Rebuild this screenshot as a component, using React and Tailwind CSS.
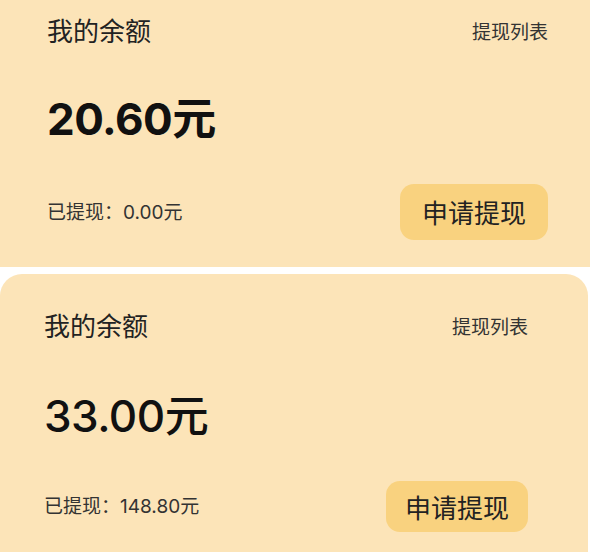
function BalanceCard({ amount, withdrawn, cardClass, headClass, amountRowClass, amountClass, footClass, btnClass }) {
  return (
    <div className={`bg-[#fce4b8] text-[#1a1a1a] ${cardClass}`}>
      <div className={`flex items-center justify-between ${headClass}`}>
        <span className="text-[26px] leading-none text-[#222]">我的余额</span>
        <span className="text-[19px] leading-none text-[#333]">提现列表</span>
      </div>
      <div className={`flex items-center ${amountRowClass}`}>
        <span className={`font-['Inter','Noto_Sans_CJK_SC',sans-serif] text-[44px] leading-none tracking-[-0.5px] text-[#111] ${amountClass}`}>
          {amount}元
        </span>
      </div>
      <div className={`flex items-center justify-between ${footClass}`}>
        <span className="font-['Inter','Noto_Sans_CJK_SC',sans-serif] text-[19px] leading-none text-[#333]">
          已提现：{withdrawn}元
        </span>
        <button className={`flex items-center justify-center rounded-[14px] bg-[#f9d27f] text-[26px] leading-none text-[#222] ${btnClass}`}>
          申请提现
        </button>
      </div>
    </div>
  )
}

export default function App() {
  return (
    <div className="w-[590px] h-[552px] overflow-hidden bg-white font-['Noto_Sans_CJK_SC','Noto_Sans',sans-serif]">
      <BalanceCard
        amount="20.60"
        withdrawn="0.00"
        cardClass="pl-[47px] pr-[42px] pb-[27px]"
        headClass="h-[60px]"
        amountRowClass="h-[118px]"
        amountClass="font-bold"
        footClass="mt-[6px]"
        btnClass="w-[148px] h-[56px]"
      />
      <div className="h-[7px]" />
      <div className="pr-[2px]">
        <BalanceCard
          amount="33.00"
          withdrawn="148.80"
          cardClass="rounded-t-[22px] pl-[44px] pr-[60px] pb-[20px]"
          headClass="h-[102px]"
          amountRowClass="h-[80px]"
          amountClass="font-medium"
          footClass="mt-[25px]"
          btnClass="w-[142px] h-[51px]"
        />
      </div>
    </div>
  )
}
